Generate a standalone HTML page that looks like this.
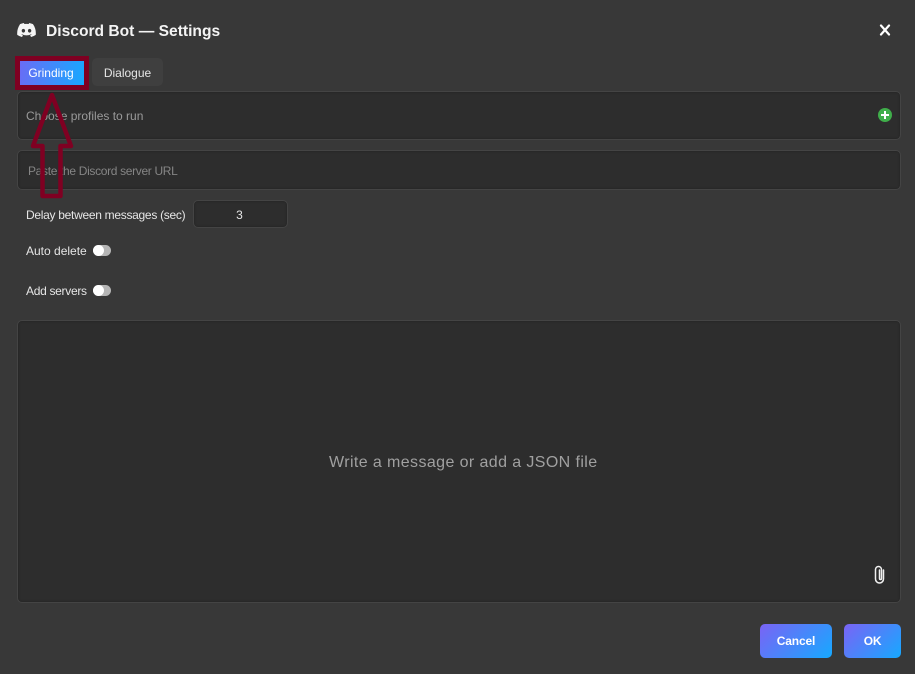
<!DOCTYPE html>
<html><head><meta charset="utf-8"><style>
*{box-sizing:border-box}
html,body{margin:0;padding:0}
body{width:915px;height:674px;background:#383838;position:relative;overflow:hidden;font-family:"Liberation Sans",sans-serif;color:#e6e6e6}
.a{position:absolute}
.t{position:absolute;white-space:nowrap;font-size:12px;line-height:16px}
.f{position:absolute;background:#2d2d2d;border:1px solid #444;border-radius:5px;box-shadow:inset 0 0 2px #222}
.b{position:absolute;border-radius:5px;background:linear-gradient(135deg,#7a63f5,#16a9ff);color:#fff;font-weight:bold;font-size:12px;text-align:center;line-height:34px}
</style></head><body>
<svg class="a" style="left:17px;top:23px" width="19" height="14" viewBox="0 0 24 18"><path fill="#f4f4f4" d="M20.300 1.500A19.800 19.800 0 0 0 15.400 0l-.6 1.300a18.300 18.300 0 0 0-5.500 0L8.600 0a19.700 19.700 0 0 0-4.900 1.500C.6 6.200-.3 10.700.1 15.200A19.900 19.900 0 0 0 6.200 18l1.300-2.100a13 13 0 0 1-2-1l.5-.4a14.200 14.200 0 0 0 12.100 0l.5.4a13 13 0 0 1-2 1l1.300 2.100a19.800 19.800 0 0 0 6-2.800c.5-5.200-.8-9.700-3.600-13.700zM8 12.400c-1.200 0-2.200-1.100-2.200-2.400S6.800 7.600 8 7.600s2.200 1.100 2.200 2.400-1 2.400-2.200 2.400zm8 0c-1.200 0-2.200-1.100-2.200-2.400s1-2.400 2.200-2.400 2.200 1.100 2.200 2.400-1 2.400-2.200 2.400z"/></svg>
<div class="t" style="left:46px;top:22px;font-size:15.600px;line-height:20px;font-weight:bold;color:#f4f4f4">Discord Bot — Settings</div>
<svg class="a" style="left:878px;top:23px" width="14" height="14" viewBox="0 0 14 14"><path d="M3 2.500l8 9M11 2.500l-8 9" stroke="#fff" stroke-width="2.200" stroke-linecap="round"/></svg>

<div class="a" style="left:92px;top:58px;width:71px;height:28px;background:#3f3f3f;border-radius:5px"></div>
<div class="t" style="left:92px;top:65px;width:71px;text-align:center">Dialogue</div>
<div class="a" style="left:15px;top:56px;width:74px;height:34px;background:#7f0022"></div>
<div class="a" style="left:20px;top:61px;width:64px;height:24px;background:linear-gradient(100deg,#6a6cf5,#16a9ff)"></div>
<div class="t" style="left:19px;top:65px;width:64px;text-align:center;color:#fff">Grinding</div>

<div class="f" style="left:17px;top:91px;width:884px;height:49px"></div>
<div class="t" style="left:26px;top:108px;color:#9a9a9a">Choose profiles to run</div>
<svg class="a" style="left:878px;top:108px" width="14" height="14" viewBox="0 0 14 14"><circle cx="7" cy="7" r="7" fill="#3fae4a"/><path d="M7 3v8M3 7h8" stroke="#fff" stroke-width="2"/></svg>

<div class="f" style="left:17px;top:150px;width:884px;height:40px"></div>
<div class="t" style="left:28px;top:163px;color:#858585;letter-spacing:-.33px">Paste the Discord server URL</div>

<div class="t" style="left:26px;top:207px;letter-spacing:-.29px">Delay between messages (sec)</div>
<div class="f" style="left:193px;top:200px;width:95px;height:28px"></div>
<div class="t" style="left:192px;top:207px;width:95px;text-align:center">3</div>

<div class="t" style="left:26px;top:243px">Auto delete</div>
<div class="a" style="left:93px;top:245px;width:18px;height:11px;border-radius:6px;background:#b5b5b5"></div>
<div class="a" style="left:93px;top:245px;width:11px;height:11px;border-radius:50%;background:#fff"></div>
<div class="t" style="left:26px;top:283px;letter-spacing:-.3px">Add servers</div>
<div class="a" style="left:93px;top:285px;width:18px;height:11px;border-radius:6px;background:#b5b5b5"></div>
<div class="a" style="left:93px;top:285px;width:11px;height:11px;border-radius:50%;background:#fff"></div>

<div class="f" style="left:17px;top:320px;width:884px;height:283px"></div>
<div class="t" style="left:329px;top:453px;font-size:16px;line-height:20px;color:#a0a0a0;letter-spacing:.4px">Write a message or add a JSON file</div>
<svg class="a" style="left:873px;top:565px" width="13" height="19" viewBox="0 0 13 19"><path d="M6.500 5v8.500a1 1 0 0 0 2 0V4.500a3 3 0 0 0-6 0V14a3.800 3.800 0 0 0 8 0V5" fill="none" stroke="#f0f0f0" stroke-width="1.500" stroke-linecap="round"/></svg>

<div class="b" style="left:760px;top:624px;width:72px;height:34px;letter-spacing:-.15px">Cancel</div>
<div class="b" style="left:844px;top:624px;width:57px;height:34px;letter-spacing:-.3px">OK</div>

<svg class="a" style="left:0;top:0" width="915" height="674"><path d="M52 95L71 146H60.500V196H42.500V146H33Z" fill="none" stroke="#7f0022" stroke-width="4.500" stroke-linejoin="round"/></svg>
</body></html>
